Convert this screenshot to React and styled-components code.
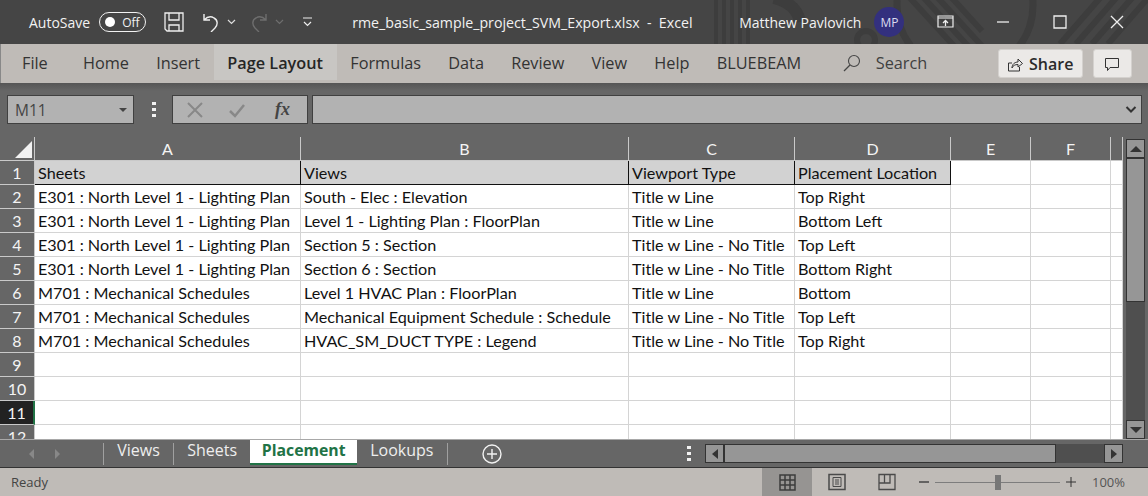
import React from 'react';
import styled, { createGlobalStyle } from 'styled-components';

const GlobalStyle = createGlobalStyle`
  html, body { margin: 0; padding: 0; background: #666; }
  * { box-sizing: border-box; }
`;

const Window = styled.div`
  width: 1148px;
  height: 496px;
  display: flex;
  flex-direction: column;
  overflow: hidden;
  font-family: "Open Sans", "Noto Sans", sans-serif;
`;

const TitleBar = styled.div`
  height: 44px;
  flex: none;
  position: relative;
  display: flex;
  align-items: center;
  background: #454545;
  color: #f2f2f2;
  font-size: 14px;
`;

const TitlePattern = styled.svg`
  position: absolute;
  right: 0;
  top: 0;
`;

const TitleGroup = styled.div`
  position: relative;
  display: flex;
  align-items: center;
`;

const AutoSave = styled.span`
  margin-left: 29px;
`;

const Toggle = styled.div`
  margin-left: 9px;
  width: 47px;
  height: 20px;
  border: 1.5px solid #f2f2f2;
  border-radius: 10px;
  display: flex;
  align-items: center;
  padding-left: 5px;
  gap: 7px;
  font-size: 12px;
`;

const Knob = styled.span`
  width: 10px;
  height: 10px;
  border-radius: 50%;
  background: #fff;
`;

const FileName = styled.span`
  margin-left: 38px;
  width: 387px;
  white-space: pre;
  font-size: 14.2px;
`;

const Avatar = styled.div`
  margin-left: 13px;
  width: 30px;
  height: 30px;
  border-radius: 50%;
  background: #33307e;
  color: #dcdcf0;
  font-size: 12px;
  display: flex;
  align-items: center;
  justify-content: center;
`;

const Ribbon = styled.div`
  height: 39px;
  flex: none;
  display: flex;
  align-items: flex-start;
  background: #bfbbb7;
  color: #333;
  font-size: 16.3px;
  padding-left: 7.4px;
  border-left: 1px solid #888;
`;

const RibbonTab = styled.div`
  height: 36px;
  padding: 1px 13.6px 0;
  margin-right: ${p => (p.$first ? '8px' : '0')};
  display: flex;
  align-items: center;
  font-weight: ${p => (p.$active ? 600 : 400)};
  background: ${p => (p.$active ? '#c8c6c3' : 'transparent')};
  color: ${p => (p.$active ? '#262626' : '#333')};
`;

const SearchBox = styled.div`
  margin-left: 28px;
  padding-top: 1px;
  width: 155px;
  height: 36px;
  flex: none;
  display: flex;
  align-items: center;
  gap: 15px;
  color: #404040;
`;

const RibbonButton = styled.div`
  height: 29px;
  margin-top: 5px;
  margin-right: 10px;
  width: ${p => p.$width}px;
  flex: none;
  display: flex;
  align-items: center;
  justify-content: center;
  gap: 6px;
  background: #ebe9e7;
  border: 1px solid #d4d1ce;
  border-radius: 3px;
  font-weight: 600;
  font-size: 16px;
  color: #2b2b2b;
`;

const FormulaBand = styled.div`
  height: 54px;
  flex: none;
  display: flex;
  align-items: flex-start;
  padding: 12px 0 0 7px;
  background: linear-gradient(#555 0, #666 8px);
`;

const FieldBox = styled.div`
  height: 29px;
  background: #b2b2b2;
  border: 1px solid #404040;
  display: flex;
  align-items: center;
`;

const NameBox = styled(FieldBox)`
  width: 127px;
  justify-content: space-between;
  padding: 0 6px 0 7px;
  color: #444;
  font-size: 15.5px;
`;

const Grip = styled.div`
  width: 4px;
  flex: none;
  display: flex;
  flex-direction: column;
  gap: 3px;
  margin: ${p => p.$margin};
`;

const GripDot = styled.span`
  height: 3px;
  background: #f2f2f2;
`;

const FormulaButtons = styled(FieldBox)`
  width: 136px;
  margin-right: 4px;
  padding-left: 14px;
  gap: 26px;
`;

const FxLabel = styled.span`
  font-family: "Liberation Serif", serif;
  font-style: italic;
  font-weight: 700;
  font-size: 18px;
  color: #444;
  margin-left: 4px;
`;

const FormulaInput = styled(FieldBox)`
  width: 830px;
  justify-content: flex-end;
  padding-right: 4px;
`;

const SheetArea = styled.div`
  height: 302px;
  flex: none;
  display: flex;
  background: #666;
`;

const GridClip = styled.div`
  width: 1123px;
  height: 302px;
  overflow: hidden;
  flex: none;
`;

const Grid = styled.div`
  display: grid;
  grid-template-columns: 35px 266px 328px 166px 156px 80px 80px 12px;
  grid-auto-rows: 24px;
  grid-template-rows: 24px;
  font-family: Lato, "Noto Sans", sans-serif;
`;

const Corner = styled.div`
  background: #666;
  border-right: 1px solid #c9c9c9;
  border-bottom: 1px solid #c9c9c9;
  display: flex;
  align-items: flex-end;
  justify-content: flex-end;
  padding: 0 2px 2px 0;
`;

const ColHeader = styled.div`
  background: #666;
  color: #f4f4f4;
  border-right: 1px solid #c9c9c9;
  border-bottom: 1px solid #c9c9c9;
  font-size: 16px;
  display: flex;
  align-items: center;
  justify-content: center;
`;

const RowHeader = styled.div`
  background: ${p => (p.$active ? '#222' : '#666')};
  color: #f4f4f4;
  border-bottom: 1px solid #c9c9c9;
  border-right: ${p => (p.$active ? '2px solid #217346' : '1px solid #c9c9c9')};
  font-size: 16px;
  display: flex;
  align-items: center;
  justify-content: center;
`;

const Cell = styled.div`
  background: ${p => (p.$head ? '#d2d2d2' : '#fff')};
  color: #111;
  border-right: 1px solid ${p => (p.$head ? '#111' : '#d4d4d4')};
  border-bottom: 1px solid ${p => (p.$head ? '#111' : '#d4d4d4')};
  font-size: 16.2px;
  line-height: 24px;
  padding-left: 3px;
  white-space: nowrap;
  overflow: hidden;
`;

const VScroll = styled.div`
  width: 25px;
  flex: none;
  padding: 2px 3px 0 3px;
  display: flex;
  flex-direction: column;
  position: relative;
`;

const ScrollTrack = styled.div`
  flex: 1;
  background: #4f4f4f;
  display: flex;
  flex-direction: ${p => (p.$horizontal ? 'row' : 'column')};
`;

const ScrollArrow = styled.div`
  width: ${p => (p.$horizontal ? '19px' : '100%')};
  height: ${p => (p.$horizontal ? '100%' : '19px')};
  flex: none;
  background: #969696;
  border: 1px solid #333;
  display: flex;
  align-items: center;
  justify-content: center;
`;

const ScrollThumb = styled.div`
  flex: none;
  width: ${p => p.$width};
  height: ${p => p.$height};
  background: #969696;
  border: 1px solid #333;
`;

const Spacer = styled.div`
  flex: 1;
`;

const TabBar = styled.div`
  height: 29px;
  flex: none;
  display: flex;
  align-items: flex-start;
  background: #666;
  border-top: 1px solid #a8a8a8;
  border-bottom: 1px solid #333;
  color: #eee;
  font-size: 16px;
`;

const TabNav = styled.div`
  width: 104px;
  height: 22px;
  margin-top: 3px;
  display: flex;
  align-items: center;
  padding-left: 29px;
  gap: 20px;
  border-right: 1px solid #a0a0a0;
`;

const SheetTab = styled.div`
  height: ${p => (p.$active ? '25px' : '22px')};
  margin-top: ${p => (p.$active ? '0' : '3px')};
  padding: ${p => (p.$active ? '0 11.5px 3px' : '0 13.2px 8px')};
  display: flex;
  align-items: center;
  background: ${p => (p.$active ? '#fff' : 'transparent')};
  color: ${p => (p.$active ? '#217346' : '#eee')};
  font-size: ${p => (p.$active ? '15.8px' : '16px')};
  font-weight: ${p => (p.$active ? 700 : 400)};
  border-bottom: ${p => (p.$active ? '2px solid #217346' : 'none')};
  border-right: ${p => (p.$divider ? '1px solid #a0a0a0' : 'none')};
`;

const AddSheet = styled.div`
  margin: 4px 0 0 34px;
  height: 20px;
  display: flex;
`;

const HScrollWrap = styled.div`
  margin-left: auto;
  width: 418px;
  height: 19px;
  margin-top: 4px;
  margin-right: 25px;
  display: flex;
  align-items: stretch;
`;

const StatusBar = styled.div`
  height: 28px;
  flex: none;
  display: flex;
  align-items: stretch;
  background: #bfbbb7;
  color: #444;
  font-size: 13px;
`;

const Ready = styled.div`
  width: 762px;
  padding-left: 11px;
  display: flex;
  align-items: center;
`;

const ViewButton = styled.div`
  width: 50px;
  display: flex;
  align-items: center;
  justify-content: center;
  background: ${p => (p.$active ? '#969492' : 'transparent')};
`;

const ZoomControl = styled.div`
  display: flex;
  align-items: center;
  margin-left: 7px;
`;

const ZoomTrack = styled.div`
  position: relative;
  width: 125px;
  height: 1px;
  margin: 0 6px;
  background: #7d7d7d;
`;

const ZoomThumb = styled.span`
  position: absolute;
  left: 60px;
  top: -7px;
  width: 6px;
  height: 15px;
  background: #777;
`;

const ZoomLabel = styled.span`
  margin-left: 16px;
  font-size: 13px;
  color: #555;
`;

const Icon = ({ size = 16, w, h, children, ...rest }) => (
  <svg width={w || size} height={h || size} viewBox={`0 0 ${w || size} ${h || size}`} fill="none" {...rest}>
    {children}
  </svg>
);

const Triangle = ({ dir }) => {
  const points = {
    up: '1,7 7,1 13,7',
    down: '1,1 7,7 13,1',
    left: '7,0 1,5 7,10',
    right: '1,0 7,5 1,10',
  }[dir];
  const wide = dir === 'up' || dir === 'down';
  return (
    <Icon w={wide ? 14 : 8} h={wide ? 8 : 10}>
      <polygon points={points} fill="#333" />
    </Icon>
  );
};

const columns = ['A', 'B', 'C', 'D', 'E', 'F', ''];

const rows = [
  ['Sheets', 'Views', 'Viewport Type', 'Placement Location'],
  ['E301 : North Level 1 - Lighting Plan', 'South - Elec : Elevation', 'Title w Line', 'Top Right'],
  ['E301 : North Level 1 - Lighting Plan', 'Level 1 - Lighting Plan : FloorPlan', 'Title w Line', 'Bottom Left'],
  ['E301 : North Level 1 - Lighting Plan', 'Section 5 : Section', 'Title w Line - No Title', 'Top Left'],
  ['E301 : North Level 1 - Lighting Plan', 'Section 6 : Section', 'Title w Line - No Title', 'Bottom Right'],
  ['M701 : Mechanical Schedules', 'Level 1 HVAC Plan : FloorPlan', 'Title w Line', 'Bottom'],
  ['M701 : Mechanical Schedules', 'Mechanical Equipment Schedule : Schedule', 'Title w Line - No Title', 'Top Left'],
  ['M701 : Mechanical Schedules', 'HVAC_SM_DUCT TYPE : Legend', 'Title w Line - No Title', 'Top Right'],
  [], [], [], [],
];

const ribbonTabs = ['File', 'Home', 'Insert', 'Page Layout', 'Formulas', 'Data', 'Review', 'View', 'Help', 'BLUEBEAM'];

export default function App() {
  return (
    <Window>
      <GlobalStyle />
      <TitleBar>
        <TitlePattern width="508" height="44" viewBox="0 0 508 44">
          <g stroke="#3d3d3d" strokeWidth="4" fill="none">
            <path d="M76 0v44M84 0v44M92 0v44M100 0v44M108 0v44" />
            <path d="M270 -2l44 48M284 -2l44 48M298 -2l44 48M312 -2l30 33" strokeWidth="6" />
            <path d="M420 44l40-46M436 44l40-46M452 44l40-46M468 44l40-46" strokeWidth="6" />
            <circle cx="325" cy="5" r="68" strokeWidth="7" />
            <circle cx="226" cy="40" r="9" strokeWidth="6" />
            <path d="M134 -2c16 4 24 12 26 24" strokeWidth="12" />
          </g>
        </TitlePattern>
        <TitleGroup>
          <AutoSave>AutoSave</AutoSave>
          <Toggle>
            <Knob />
            Off
          </Toggle>
          <Icon size={20} style={{ marginLeft: 18 }}>
            <path d="M1 1h18v18H3l-2-2z M5 1v7h10V1 M5 19v-6h10v6" stroke="#eee" strokeWidth="1.3" />
          </Icon>
          <Icon size={20} style={{ marginLeft: 17 }}>
            <path d="M3 2v6h6 M3 8c3-3 7-4 10-2 4 2 4 7 1 10l-4 4" stroke="#eee" strokeWidth="1.4" />
          </Icon>
          <Icon w={10} h={6} style={{ marginLeft: 6 }}>
            <path d="M1 1l3.500 3.500L8 1" stroke="#ddd" strokeWidth="1.200" />
          </Icon>
          <Icon size={20} style={{ marginLeft: 12 }}>
            <path d="M17 2v6h-6 M17 8c-3-3-7-4-10-2-4 2-4 7-1 10l4 4" stroke="#6e6e6e" strokeWidth="1.4" />
          </Icon>
          <Icon w={10} h={6} style={{ marginLeft: 6 }}>
            <path d="M1 1l3.500 3.500L8 1" stroke="#6e6e6e" strokeWidth="1.200" />
          </Icon>
          <Icon w={12} h={10} style={{ marginLeft: 17 }}>
            <path d="M1 1h9 M2 5l3.500 3.500L9 5" stroke="#eee" strokeWidth="1.200" />
          </Icon>
          <FileName>rme_basic_sample_project_SVM_Export.xlsx  -  Excel</FileName>
          <span>Matthew Pavlovich</span>
          <Avatar>MP</Avatar>
          <Icon w={18} h={14} style={{ marginLeft: 33 }}>
            <path d="M1 1h15v11H1z M1 3h15" stroke="#eee" strokeWidth="1.200" />
            <path d="M8.500 11V6 M6 8l2.500-2.500L11 8" stroke="#eee" strokeWidth="1.300" />
          </Icon>
          <Icon w={14} h={4} style={{ marginLeft: 41 }}>
            <path d="M1 2h12" stroke="#eee" strokeWidth="1.300" />
          </Icon>
          <Icon size={14} style={{ marginLeft: 43 }}>
            <path d="M1 1h12v12H1z" stroke="#eee" strokeWidth="1.300" />
          </Icon>
          <Icon size={14} style={{ marginLeft: 43 }}>
            <path d="M1 1l12 12M13 1L1 13" stroke="#eee" strokeWidth="1.300" />
          </Icon>
        </TitleGroup>
      </TitleBar>

      <Ribbon>
        {ribbonTabs.map(tab => (
          <RibbonTab key={tab} $first={tab === 'File'} $active={tab === 'Page Layout'}>{tab}</RibbonTab>
        ))}
        <SearchBox>
          <Icon size={18}>
            <circle cx="11" cy="7" r="5.500" stroke="#444" strokeWidth="1.100" />
            <path d="M7 11l-6 6" stroke="#444" strokeWidth="1.200" />
          </Icon>
          Search
        </SearchBox>
        <RibbonButton $width={85}>
          <Icon size={16}>
            <path d="M5 7H1.500v8h11v-4 M5 12c0-4 3-6 6-6V3l4.500 4.500L11 11V8.500c-3 0-5 1-6 3.500z" stroke="#333" strokeWidth="1" />
          </Icon>
          Share
        </RibbonButton>
        <RibbonButton $width={39}>
          <Icon size={16}>
            <path d="M1.500 2.500h13v9H6l-2.500 3v-3h-2z" stroke="#333" strokeWidth="1" />
          </Icon>
        </RibbonButton>
      </Ribbon>

      <FormulaBand>
        <NameBox>
          M11
          <Icon w={8} h={4}>
            <polygon points="0,0 8,0 4,4" fill="#444" />
          </Icon>
        </NameBox>
        <Grip $margin="7px 16px 0 18px">
          <GripDot /><GripDot /><GripDot />
        </Grip>
        <FormulaButtons>
          <Icon size={16}>
            <path d="M1 1l14 14M15 1L1 15" stroke="#888" strokeWidth="2" />
          </Icon>
          <Icon size={16}>
            <path d="M1 9l5 5 9-11" stroke="#888" strokeWidth="2.500" />
          </Icon>
          <FxLabel>fx</FxLabel>
        </FormulaButtons>
        <FormulaInput>
          <Icon w={12} h={7}>
            <path d="M1.500 1l4.500 4.500L10.500 1" stroke="#333" strokeWidth="2" />
          </Icon>
        </FormulaInput>
      </FormulaBand>

      <SheetArea>
        <GridClip>
          <Grid>
            <Corner>
              <Icon size={18}>
                <polygon points="18,1 18,18 1,18" fill="#f2f2f2" />
              </Icon>
            </Corner>
            {columns.map(c => <ColHeader key={c}>{c}</ColHeader>)}
            {rows.map((row, r) => (
              <React.Fragment key={r}>
                <RowHeader $active={r === 10}>{r + 1}</RowHeader>
                {columns.map((c, i) => (
                  <Cell key={c} $head={r === 0 && i < 4}>{row[i]}</Cell>
                ))}
              </React.Fragment>
            ))}
          </Grid>
        </GridClip>
        <VScroll>
          <ScrollTrack>
            <ScrollArrow><Triangle dir="up" /></ScrollArrow>
            <ScrollThumb $width="100%" $height="144px" />
            <Spacer />
            <ScrollArrow><Triangle dir="down" /></ScrollArrow>
          </ScrollTrack>
        </VScroll>
      </SheetArea>

      <TabBar>
        <TabNav>
          <Icon w={6} h={10}><polygon points="5,0 0,5 5,10" fill="#888" /></Icon>
          <Icon w={6} h={10}><polygon points="0,0 5,5 0,10" fill="#888" /></Icon>
        </TabNav>
        <SheetTab $divider>Views</SheetTab>
        <SheetTab>Sheets</SheetTab>
        <SheetTab $active>Placement</SheetTab>
        <SheetTab $divider>Lookups</SheetTab>
        <AddSheet>
          <Icon size={20}>
            <circle cx="10" cy="10" r="9" stroke="#f2f2f2" strokeWidth="1.400" />
            <path d="M10 5v10M5 10h10" stroke="#f2f2f2" strokeWidth="1.400" />
          </Icon>
        </AddSheet>
        <Grip $margin="6px 0 0 185px">
          <GripDot /><GripDot /><GripDot />
        </Grip>
        <HScrollWrap>
          <ScrollTrack $horizontal>
            <ScrollArrow $horizontal><Triangle dir="left" /></ScrollArrow>
            <ScrollThumb $width="332px" $height="100%" />
            <Spacer />
            <ScrollArrow $horizontal><Triangle dir="right" /></ScrollArrow>
          </ScrollTrack>
        </HScrollWrap>
      </TabBar>

      <StatusBar>
        <Ready>Ready</Ready>
        <ViewButton $active>
          <Icon size={17}>
            <path d="M1 1h15v15H1z M1 6h15 M1 11h15 M6 1v15 M11 1v15" stroke="#3c3c3c" strokeWidth="1.500" />
          </Icon>
        </ViewButton>
        <ViewButton>
          <Icon size={18}>
            <path d="M1 1.500h16v15H1z" stroke="#4a4a4a" strokeWidth="1.500" />
            <path d="M5 4.500h8v9H5z M7 7h4 M7 9h4 M7 11h4" stroke="#4a4a4a" strokeWidth="1" />
          </Icon>
        </ViewButton>
        <ViewButton>
          <Icon size={18}>
            <path d="M1 1.500h16v15H1z M1 10h11V1.500 M6.500 1.500V10" stroke="#4a4a4a" strokeWidth="1.300" />
          </Icon>
        </ViewButton>
        <ZoomControl>
          <Icon w={10} h={2}><path d="M0 1h10" stroke="#333" strokeWidth="1.300" /></Icon>
          <ZoomTrack><ZoomThumb /></ZoomTrack>
          <Icon size={10}><path d="M0 5h10M5 0v10" stroke="#333" strokeWidth="1" /></Icon>
          <ZoomLabel>100%</ZoomLabel>
        </ZoomControl>
      </StatusBar>
    </Window>
  );
}
